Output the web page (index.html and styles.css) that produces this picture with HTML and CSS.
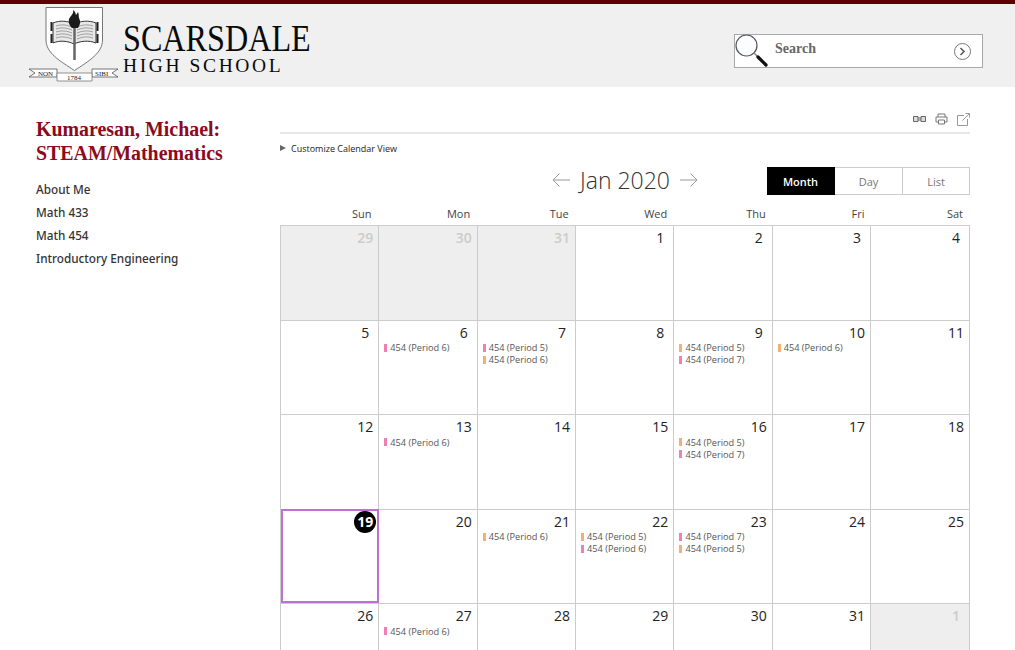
FILE: index.html
```html
<!DOCTYPE html>
<html lang="en">
<head>
<meta charset="utf-8">
<title>Scarsdale High School</title>
<link rel="stylesheet" href="styles.css">
</head>
<body>
<header class="site-header">
  <div class="brand">
    <svg class="crest" width="92" height="76" viewBox="0 0 92 76">
      <path d="M17 .5H73.500V33C73.500 46 60 54 45.500 63.500C31 54 17 46 17 33Z" fill="#fff" stroke="#777" stroke-width="1"/>
      <path d="M24 16C31 13 39 14 45 17C51 14 60 13 67 16V36C60 33 51 34 45 37C39 34 31 33 24 36Z" fill="#e8e8e8" stroke="#333" stroke-width="1"/>
      <path d="M27 19C33 17 38 18 43 20M27 22C33 20 38 21 43 23M27 25C33 23 38 24 43 26M27 28C33 26 38 27 43 29M27 31C33 29 38 30 43 32M48 20C53 18 58 17 64 19M48 23C53 21 58 20 64 22M48 26C53 24 58 23 64 25M48 29C53 27 58 26 64 28M48 32C53 30 58 29 64 31" stroke="#888" stroke-width=".8" fill="none"/>
      <path d="M22.500 15V24M68.500 15V24M22.500 27V36M68.500 27V36" stroke="#222" stroke-width="2"/>
      <path d="M44 3C45 7 42 8 40 12C39 16 41 19 43 21H49C51 18 52 15 50 11C49.500 9 50 7 49 5C48 7 47 8 47 8C46.500 6 46 4 44 3Z" fill="#1b1b1b"/>
      <path d="M45.500 21V53" stroke="#666" stroke-width="2.500"/>
      <path d="M0 62H28V70H0L6 66ZM89 62H63V70H89L83 66Z" fill="#fff" stroke="#555" stroke-width=".8"/>
      <path d="M28 66H63V74H28Z" fill="#fff" stroke="#777" stroke-width=".8"/>
      <text class="crest-word" x="9" y="68.500">NON</text>
      <text class="crest-word" x="66" y="68.500">SIBI</text>
      <text class="crest-word" x="38" y="72.500">1784</text>
    </svg>
    <div class="wordmark">
      <div class="wordmark-top">SCARSDALE</div>
      <div class="wordmark-bottom">HIGH SCHOOL</div>
    </div>
  </div>
  <form class="search">
    <svg class="search-lens" width="36" height="34" viewBox="0 0 36 34">
      <circle cx="11.500" cy="11.500" r="10.500" fill="#fcfdff" stroke="#556" stroke-width="1.200"/>
      <path d="M19 19L23 23" stroke="#888" stroke-width="1.500"/>
      <path d="M23 23L31 31" stroke="#111" stroke-width="3.200" stroke-linecap="round"/>
    </svg>
    <span class="search-label">Search</span>
    <svg class="search-go" width="17" height="17" viewBox="0 0 17 17">
      <circle cx="8.500" cy="8.500" r="8" fill="none" stroke="#777" stroke-width="1"/>
      <path d="M6.500 5L10 8.500L6.500 12" fill="none" stroke="#555" stroke-width="1.500"/>
    </svg>
  </form>
</header>

<div class="page">
  <aside class="sidebar">
    <h1 class="teacher">Kumaresan, Michael: STEAM/Mathematics</h1>
    <nav class="side-nav">
      <a>About Me</a>
      <a>Math 433</a>
      <a>Math 454</a>
      <a>Introductory Engineering</a>
    </nav>
  </aside>

  <main class="content">
    <div class="tools">
      <svg width="13" height="10" viewBox="0 0 13 10"><path d="M.5 2.500H5V7.500H.5ZM8 2.500H12.500V7.500H8ZM5 4H8M5 6H8" fill="#ddd" stroke="#666"/></svg>
      <svg width="13" height="12" viewBox="0 0 13 12"><path d="M3 4V1H10V4M3 9H1V4H12V9H10M3.500 7H9.500V11H3.500Z" fill="none" stroke="#777"/></svg>
      <svg width="13" height="13" viewBox="0 0 13 13"><path d="M7 2.500H.5V12.500H10.500V6M5.500 7.500L12.500 .5M8.500 .5H12.500V4.500" fill="none" stroke="#999"/></svg>
    </div>
    <div class="customize"><span class="caret"></span>Customize Calendar View</div>
    <div class="cal-head">
      <div class="month-nav">
        <svg width="18" height="14" viewBox="0 0 18 14"><path d="M18 7H1M7.500 .5L1 7L7.500 13.500" fill="none" stroke="#999"/></svg>
        <span class="month-title">Jan 2020</span>
        <svg width="18" height="14" viewBox="0 0 18 14"><path d="M0 7H17M10.500 .5L17 7L10.500 13.500" fill="none" stroke="#999"/></svg>
      </div>
      <div class="view-switch">
        <span class="view active">Month</span>
        <span class="view">Day</span>
        <span class="view">List</span>
      </div>
    </div>
    <div class="weekdays">
      <span>Sun</span><span>Mon</span><span>Tue</span><span>Wed</span><span>Thu</span><span>Fri</span><span>Sat</span>
    </div>
    <div class="grid">
      <div class="day off"><b>29</b></div>
      <div class="day off"><b>30</b></div>
      <div class="day off"><b>31</b></div>
      <div class="day"><b>1</b></div>
      <div class="day"><b>2</b></div>
      <div class="day"><b>3</b></div>
      <div class="day"><b>4</b></div>

      <div class="day"><b>5</b></div>
      <div class="day"><b>6</b><p class="ev pink">454 (Period 6)</p></div>
      <div class="day"><b>7</b><p class="ev pink">454 (Period 5)</p><p class="ev orange">454 (Period 6)</p></div>
      <div class="day"><b>8</b></div>
      <div class="day"><b>9</b><p class="ev orange">454 (Period 5)</p><p class="ev pink">454 (Period 7)</p></div>
      <div class="day"><b>10</b><p class="ev orange">454 (Period 6)</p></div>
      <div class="day"><b>11</b></div>

      <div class="day"><b>12</b></div>
      <div class="day"><b>13</b><p class="ev pink">454 (Period 6)</p></div>
      <div class="day"><b>14</b></div>
      <div class="day"><b>15</b></div>
      <div class="day"><b>16</b><p class="ev orange">454 (Period 5)</p><p class="ev pink">454 (Period 7)</p></div>
      <div class="day"><b>17</b></div>
      <div class="day"><b>18</b></div>

      <div class="day today"><b>19</b></div>
      <div class="day"><b>20</b></div>
      <div class="day"><b>21</b><p class="ev orange">454 (Period 6)</p></div>
      <div class="day"><b>22</b><p class="ev orange">454 (Period 5)</p><p class="ev pink">454 (Period 6)</p></div>
      <div class="day"><b>23</b><p class="ev pink">454 (Period 7)</p><p class="ev orange">454 (Period 5)</p></div>
      <div class="day"><b>24</b></div>
      <div class="day"><b>25</b></div>

      <div class="day"><b>26</b></div>
      <div class="day"><b>27</b><p class="ev pink">454 (Period 6)</p></div>
      <div class="day"><b>28</b></div>
      <div class="day"><b>29</b></div>
      <div class="day"><b>30</b></div>
      <div class="day"><b>31</b></div>
      <div class="day off"><b>1</b></div>
    </div>
  </main>
</div>
</body>
</html>
```
FILE: styles.css
```css
* { box-sizing: border-box; }
html, body { margin: 0; height: 650px; overflow: hidden; background: #fff; }
body { font-family: "Open Sans", sans-serif; color: #222; }

.site-header {
  height: 87px;
  background: #f0f0f0;
  border-top: 4px solid #5c0000;
  display: flex;
  justify-content: space-between;
  padding: 3px 32px 0 29px;
}
.brand { display: flex; align-items: flex-start; }
.crest { display: block; flex: none; }
.crest-word { font: 7px "Liberation Serif", serif; fill: #222; }
.wordmark { margin: 14px 0 0 2px; font-family: "Liberation Serif", serif; color: #0a0a0a; }
.wordmark-top { font-size: 37.500px; line-height: 35px; white-space: nowrap; transform: scaleX(.858); transform-origin: left center; }
.wordmark-bottom { font-size: 19.500px; line-height: 19px; letter-spacing: 2.600px; white-space: nowrap; }

.search {
  width: 249px;
  height: 34px;
  margin-top: 27px;
  background: #fff;
  border: 1px solid #a8a8a8;
  display: flex;
  align-items: center;
  overflow: visible;
}
.search-lens { flex: none; align-self: flex-start; margin-top: -1px; }
.search-label { flex: 1; margin: -5px 0 0 4px; font: bold 14px "Liberation Serif", serif; color: #666; }
.search-go { flex: none; margin: 0 11px 0 0; }

.page { display: flex; padding-left: 36px; }
.sidebar { width: 244px; flex: none; padding-top: 30px; }
.teacher {
  margin: 0;
  width: 205px;
  font: bold 19.900px/24px "Liberation Serif", serif;
  color: #8c0a1c;
}
.side-nav { display: flex; flex-direction: column; margin-top: 13px; }
.side-nav a { font: 500 11.750px/23px "Noto Sans", sans-serif; color: #333; white-space: nowrap; }

.content { width: 690px; flex: none; }
.tools {
  height: 47px;
  padding: 19px 0 0;
  display: flex;
  justify-content: flex-end;
  align-items: center;
  gap: 9px;
  border-bottom: 2px solid #e8e8e8;
}
.customize { display: flex; align-items: center; height: 14px; margin-top: 7px; font-size: 9px; color: #222; }
.caret {
  width: 0; height: 0; margin-right: 5px;
  border-left: 6px solid #666;
  border-top: 3.500px solid transparent;
  border-bottom: 3.500px solid transparent;
}
.cal-head { display: flex; justify-content: flex-end; align-items: center; height: 28px; margin-top: 12px; }
.month-nav { display: flex; align-items: center; gap: 10px; margin-right: 69px; margin-top: -2px; }
.month-title { font-size: 23px; font-weight: 300; color: #333; line-height: 28px; }
.view-switch { display: flex; width: 203px; height: 28px; }
.view {
  flex: 1;
  border: 1px solid #ccc;
  border-left: 0;
  font-size: 11px;
  color: #777;
  display: flex;
  align-items: center;
  justify-content: center;
}
.view:last-child { flex: none; width: 67px; }
.view.active { background: #000; color: #fff; font-weight: 600; border-color: #000; }

.weekdays { display: grid; grid-template-columns: repeat(7, 1fr); margin-top: 6px; height: 24px; }
.weekdays span { text-align: right; padding-right: 7px; font-size: 11px; line-height: 26px; color: #444; }

.grid {
  display: grid;
  grid-template-columns: repeat(6, 98.350px) 1fr;
  grid-auto-rows: 94.500px;
  border-top: 1px solid #ccc;
  border-left: 1px solid #ccc;
}
.day { border-right: 1px solid #ccc; border-bottom: 1px solid #ccc; padding: 0 2px 0 5px; position: relative; min-width: 0; }
.day b { display: block; width: 22px; margin-left: auto; text-align: center; font-size: 14px; font-weight: 400; line-height: 24px; height: 21px; color: #222; }
.off { background: #eee; }
.off b { color: #ccc; font-weight: 600; }
.ev { margin: 0; height: 12px; display: flex; align-items: center; font-size: 9.200px; color: #555; white-space: nowrap; }
.ev::before { content: ""; width: 3px; height: 8px; margin-right: 3px; flex: none; }
.pink::before { background: #f07fb5; }
.orange::before { background: #f5ae74; }
.today::after { content: ""; position: absolute; top: -1px; right: -1px; bottom: 0; left: 0; border: 2px solid #bb72d3; }
.today b {
  position: absolute; top: 1px; right: 2px;
  z-index: 1;
  height: 22px;
  border-radius: 50%;
  background: #000;
  color: #fff;
  font-weight: 700;
  line-height: 22px;
}
```
